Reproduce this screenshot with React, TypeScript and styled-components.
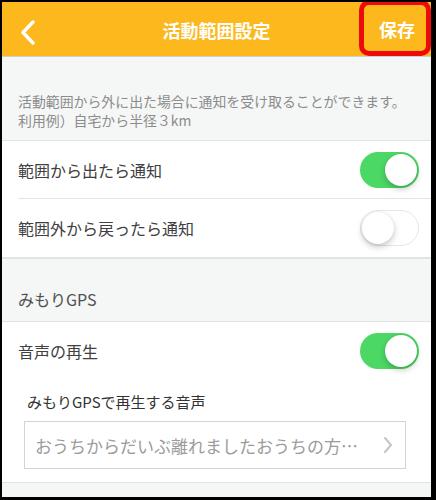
import React from "react";
import styled, { createGlobalStyle } from "styled-components";

const Global = createGlobalStyle`
  html, body { margin: 0; padding: 0; background: #fff; }
  body { font-family: "Noto Sans CJK JP", "Noto Sans", sans-serif; }
  * { box-sizing: border-box; }
`;

const Frame = styled.div`
  position: relative;
  width: 436px;
  height: 500px;
  border-style: solid;
  border-color: #000;
  border-width: 2px 5px 3px 2px;
  background: #f5f6f6;
  overflow: hidden;
  display: flex;
  flex-direction: column;
`;

const Header = styled.header`
  position: relative;
  height: 55px;
  flex: none;
  background: #fcb81c;
  border-bottom: 1px solid #cfcfcf;
  display: flex;
  align-items: center;
  justify-content: center;
`;

const BackButton = styled.div`
  position: absolute;
  left: 17px;
  top: 17px;
  width: 18px;
  height: 26px;
`;

const Title = styled.h1`
  margin: 0;
  color: #fff;
  font-size: 18px;
  font-weight: 700;
  line-height: 1;
  margin-top: 1px;
`;

const SaveButton = styled.div`
  position: absolute;
  right: 16px;
  top: 0;
  height: 54px;
  display: flex;
  align-items: center;
  color: #fff;
  font-size: 18px;
  font-weight: 700;
`;

const Highlight = styled.div`
  position: absolute;
  left: 357px;
  top: -2px;
  width: 72px;
  height: 56px;
  border: 5px solid #ee0a0a;
  border-radius: 10px;
  pointer-events: none;
`;

const Description = styled.p`
  margin: 0;
  padding: 35px 16px 10px 16px;
  color: #8c8c8c;
  font-size: 13.9px;
  line-height: 19px;
  white-space: nowrap;
`;

const Section = styled.section`
  background: #fff;
  border-top: 1px solid #e3e3e3;
  border-bottom: 1px solid #e3e3e3;
`;

const Row = styled.div<{ $divider?: boolean }>`
  position: relative;
  height: 58px;
  display: flex;
  align-items: center;
  justify-content: space-between;
  padding: 0 12px 0 16px;
  &::after {
    content: "";
    display: ${(p) => (p.$divider ? "block" : "none")};
    position: absolute;
    left: 16px;
    right: 0;
    bottom: 0;
    height: 1px;
    background: #e3e3e3;
  }
`;

const RowLabel = styled.span`
  color: #404040;
  font-size: 16px;
`;

const Track = styled.div<{ $on: boolean }>`
  position: relative;
  width: 59px;
  height: 36px;
  border-radius: 18px;
  background: ${(p) => (p.$on ? "#4cd864" : "#fff")};
  border: ${(p) => (p.$on ? "none" : "1.5px solid #e6e6e6")};
`;

const Knob = styled.div<{ $on: boolean }>`
  position: absolute;
  top: ${(p) => (p.$on ? "2px" : "0.5px")};
  ${(p) => (p.$on ? "right: 2px;" : "left: 0.5px;")}
  width: 32px;
  height: 32px;
  border-radius: 50%;
  background: #fff;
  box-shadow: 0 3px 6px rgba(0, 0, 0, 0.22), 0 0 0 0.5px rgba(0, 0, 0, 0.06);
`;

const GroupTitle = styled.div`
  padding: 29px 16px 11px 16px;
  color: #505050;
  font-size: 16px;
  line-height: 22px;
  border-top: 1px solid #e3e3e3;
`;

const SoundBlock = styled.div`
  padding: 11px 25px 13px 22px;
`;

const FieldLabel = styled.div`
  color: #333;
  font-size: 15px;
  line-height: 22px;
  padding-left: 3px;
  margin-bottom: 8px;
`;

const Select = styled.div`
  height: 48px;
  border: 1px solid #d4d4d4;
  display: flex;
  align-items: center;
  justify-content: space-between;
  padding: 0 12px 0 10px;
  color: #9b9b9b;
  font-size: 17px;
  white-space: nowrap;
`;

const Spacer = styled.div`
  flex: 1;
`;

function Toggle({ on }: { on: boolean }) {
  return (
    <Track $on={on}>
      <Knob $on={on} />
    </Track>
  );
}

export default function App() {
  return (
    <>
      <Global />
      <Frame>
        <Header>
          <BackButton>
            <svg width="18" height="26" viewBox="0 0 18 26">
              <polyline
                points="14,3 4,13.5 14,24"
                fill="none"
                stroke="#fff"
                strokeWidth="3.4"
                strokeLinecap="round"
                strokeLinejoin="round"
              />
            </svg>
          </BackButton>
          <Title>活動範囲設定</Title>
          <SaveButton>保存</SaveButton>
        </Header>
        <Description>
          活動範囲から外に出た場合に通知を受け取ることができます。
          <br />
          利用例）自宅から半径３km
        </Description>
        <Section>
          <Row $divider>
            <RowLabel>範囲から出たら通知</RowLabel>
            <Toggle on />
          </Row>
          <Row>
            <RowLabel>範囲外から戻ったら通知</RowLabel>
            <Toggle on={false} />
          </Row>
        </Section>
        <GroupTitle>みもりGPS</GroupTitle>
        <Section>
          <Row>
            <RowLabel>音声の再生</RowLabel>
            <Toggle on />
          </Row>
          <SoundBlock>
            <FieldLabel>みもりGPSで再生する音声</FieldLabel>
            <Select>
              <span>おうちからだいぶ離れましたおうちの方…</span>
              <svg width="10" height="18" viewBox="0 0 10 18">
                <polyline
                  points="2,2 8,9 2,16"
                  fill="none"
                  stroke="#c4c4c4"
                  strokeWidth="2"
                  strokeLinecap="round"
                  strokeLinejoin="round"
                />
              </svg>
            </Select>
          </SoundBlock>
        </Section>
        <Spacer />
        <Highlight />
      </Frame>
    </>
  );
}
